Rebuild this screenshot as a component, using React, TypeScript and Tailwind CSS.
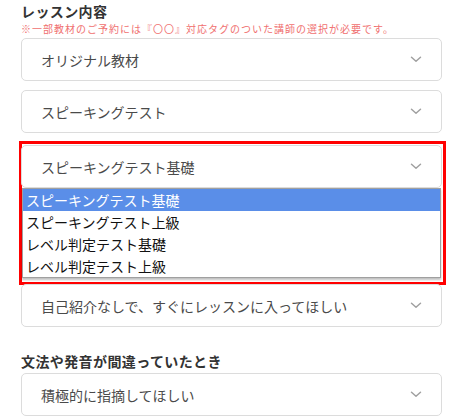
import React from "react";

const font = { fontFamily: '"Noto Sans CJK JP", "Noto Sans", sans-serif' };

function Chevron() {
  return (
    <svg width="12" height="7" viewBox="0 0 12 7" className="shrink-0">
      <path d="M1.5 1.2 L6 5.2 L10.5 1.2" fill="none" stroke="#a0a0a0" strokeWidth="1.5" strokeLinecap="round" strokeLinejoin="round" />
    </svg>
  );
}

function SelectBox({ label, className = "" }: { label: string; className?: string }) {
  return (
    <div
      className={`flex h-[43px] w-[421px] items-center justify-between rounded-[5px] border border-[#dcdcdc] bg-white pl-[19px] pr-[19px] ${className}`}
    >
      <span className="text-[14px] leading-[18px] text-[#4a4a4a]">{label}</span>
      <Chevron />
    </div>
  );
}

const options = [
  "スピーキングテスト基礎",
  "スピーキングテスト上級",
  "レベル判定テスト基礎",
  "レベル判定テスト上級",
];

export default function App() {
  return (
    <div className="h-[419px] w-[453px] overflow-hidden bg-white pl-[21px] pt-[2px]" style={font}>
      <div className="text-[14px] font-bold leading-[18px] tracking-[0.4px] text-[#333]">レッスン内容</div>
      <div className="mt-[1px] text-[10px] leading-[15px] tracking-[1px] text-[#f07070]">
        ※一部教材のご予約には『〇〇』対応タグのついた講師の選択が必要です。
      </div>
      <SelectBox label="オリジナル教材" className="mt-[2px]" />
      <SelectBox label="スピーキングテスト" className="mt-[9px]" />
      <div className="-ml-[2px] mt-[8px] h-[144px] w-[427px] border-[3px] border-[#ff0000] bg-white">
        <SelectBox label="スピーキングテスト基礎" className="-ml-[1px] mt-[1px]" />
        <div className="w-[419px] border border-[#a0a0a0] bg-white shadow-[0_2px_2px_rgba(0,0,0,0.25)]">
          {options.map((o, i) => (
            <div
              key={o}
              className={`h-[22px] pl-[3px] text-[14px] leading-[22px] ${
                i === 0 ? "bg-[#5a8ee8] text-white" : "text-[#111]"
              }`}
            >
              {o}
            </div>
          ))}
        </div>
      </div>
      <SelectBox label="自己紹介なしで、すぐにレッスンに入ってほしい" className="-mt-[1px]" />
      <div className="mt-[25px] text-[14px] font-bold leading-[18px] tracking-[0.4px] text-[#333]">
        文法や発音が間違っていたとき
      </div>
      <SelectBox label="積極的に指摘してほしい" className="mt-[3px]" />
    </div>
  );
}
